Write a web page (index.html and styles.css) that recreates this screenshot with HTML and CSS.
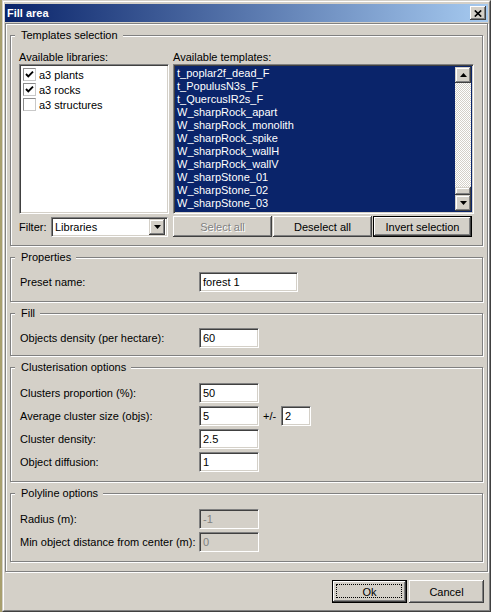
FILE: index.html
```html
<!DOCTYPE html>
<html>
<head>
<meta charset="utf-8">
<title>Fill area</title>
<link rel="stylesheet" href="styles.css">
</head>
<body>
<div class="window">
  <div class="frame">
    <div class="titlebar">
      <span class="title">Fill area</span>
      <span class="close"><svg width="8" height="7" viewBox="0 0 8 7"><path d="M0.8 0.5 L7.2 6.5 M7.2 0.5 L0.8 6.5" stroke="#000" stroke-width="1.7" fill="none"/></svg></span>
    </div>
    <div class="panel">
      <div class="group g-templates">
        <div class="group-title">Templates selection</div>
        <div class="tpl-grid">
          <div class="cap">Available libraries:</div>
          <div class="cap">Available templates:</div>
          <div class="listbox libs">
            <div class="lib-row"><span class="chk"><svg width="9" height="9" viewBox="0 0 9 9"><polyline points="1,4 3.3,6.4 8,1.6" stroke="#000" stroke-width="1.9" fill="none"/></svg></span>a3 plants</div>
            <div class="lib-row"><span class="chk"><svg width="9" height="9" viewBox="0 0 9 9"><polyline points="1,4 3.3,6.4 8,1.6" stroke="#000" stroke-width="1.9" fill="none"/></svg></span>a3 rocks</div>
            <div class="lib-row"><span class="chk"></span>a3 structures</div>
          </div>
          <div class="listbox tpls">
            <div class="tpl-items">
              <div class="tpl-row">t_poplar2f_dead_F</div>
              <div class="tpl-row">t_PopulusN3s_F</div>
              <div class="tpl-row">t_QuercusIR2s_F</div>
              <div class="tpl-row">W_sharpRock_apart</div>
              <div class="tpl-row">W_sharpRock_monolith</div>
              <div class="tpl-row">W_sharpRock_spike</div>
              <div class="tpl-row">W_sharpRock_wallH</div>
              <div class="tpl-row">W_sharpRock_wallV</div>
              <div class="tpl-row">W_sharpStone_01</div>
              <div class="tpl-row">W_sharpStone_02</div>
              <div class="tpl-row">W_sharpStone_03</div>
            </div>
            <div class="vscroll">
              <span class="sbtn"><svg width="7" height="4" viewBox="0 0 7 4"><polygon points="3.5,0 7,4 0,4" fill="#000"/></svg></span>
              <span class="track"></span>
              <span class="thumb"></span>
              <span class="sbtn"><svg width="7" height="4" viewBox="0 0 7 4"><polygon points="0,0 7,0 3.5,4" fill="#000"/></svg></span>
            </div>
          </div>
        </div>
        <div class="tpl-grid filter-grid">
          <div class="filter">
            <span class="filter-label">Filter:</span>
            <div class="combo">
              <span class="combo-text">Libraries</span>
              <span class="sbtn combo-btn"><svg width="7" height="4" viewBox="0 0 7 4"><polygon points="0,0 7,0 3.5,4" fill="#000"/></svg></span>
            </div>
          </div>
          <div class="btnrow">
            <span class="btn small disabled">Select all</span>
            <span class="btn small">Deselect all</span>
            <span class="btn small default">Invert selection</span>
          </div>
        </div>
      </div>

      <div class="group g-props">
        <div class="group-title">Properties</div>
        <div class="row"><span class="lbl">Preset name:</span><span class="edit wide">forest 1</span></div>
      </div>

      <div class="group g-fill">
        <div class="group-title">Fill</div>
        <div class="row"><span class="lbl">Objects density (per hectare):</span><span class="edit">60</span></div>
      </div>

      <div class="group g-cluster">
        <div class="group-title">Clusterisation options</div>
        <div class="rows">
          <div class="row"><span class="lbl">Clusters proportion (%):</span><span class="edit">50</span></div>
          <div class="row"><span class="lbl">Average cluster size (objs):</span><span class="edit">5</span><span class="pm">+/-</span><span class="edit tiny">2</span></div>
          <div class="row"><span class="lbl">Cluster density:</span><span class="edit">2.5</span></div>
          <div class="row"><span class="lbl">Object diffusion:</span><span class="edit">1</span></div>
        </div>
      </div>

      <div class="group g-poly">
        <div class="group-title">Polyline options</div>
        <div class="rows">
          <div class="row"><span class="lbl">Radius (m):</span><span class="edit off">-1</span></div>
          <div class="row"><span class="lbl">Min object distance from center (m):</span><span class="edit off">0</span></div>
        </div>
      </div>
    </div>

    <div class="footer">
      <span class="btn big default focus">Ok</span>
      <span class="btn big">Cancel</span>
    </div>
  </div>
</div>
</body>
</html>
```

FILE: styles.css
```css
* { box-sizing: border-box; }

html, body {
  margin: 0;
  padding: 0;
}

body {
  width: 491px;
  height: 612px;
  overflow: hidden;
  background: #a89f6e;
  font-family: "Liberation Sans", Arial, sans-serif;
  font-size: 11px;
  color: #000;
}

.window {
  margin-left: 2px;
  width: 489px;
  height: 612px;
  background: #d4d0c8;
  border: 1px solid;
  border-color: #d4d0c8 #404040 #404040 #d4d0c8;
}

.frame {
  height: 100%;
  border: 1px solid;
  border-color: #ffffff #808080 #808080 #ffffff;
  padding: 1px;
  display: flex;
  flex-direction: column;
}

.titlebar {
  height: 18px;
  margin-top: 1px;
  display: flex;
  align-items: center;
  justify-content: space-between;
  background: linear-gradient(to right, #0a246a, #a6caf0);
  padding-left: 2px;
}

.title {
  color: #fff;
  font-weight: bold;
  font-size: 11px;
  line-height: 13px;
}

.close {
  width: 16px;
  height: 14px;
  margin-right: 2px;
  background: #d4d0c8;
  display: flex;
  align-items: center;
  justify-content: center;
  box-shadow: inset -1px -1px #404040, inset 1px 1px #ffffff, inset -2px -2px #808080;
}

.panel {
  margin-top: 1px;
  border: 1px solid #808080;
  box-shadow: inset 1px 1px #ffffff, 1px 1px #ffffff;
  padding: 11px 4px 9px 4px;
}

.group {
  position: relative;
  border: 1px solid #808080;
  box-shadow: inset 1px 1px #ffffff, 1px 1px #ffffff;
  margin-top: 11px;
}

.group:first-child { margin-top: 0; }

.group-title {
  position: absolute;
  top: -8px;
  left: 4px;
  padding: 0 5px 0 6px;
  background: #d4d0c8;
  line-height: 14px;
  white-space: nowrap;
}

.g-templates { height: 211px; padding: 14px 7px 0 8px; }
.g-props { height: 45px; padding: 14px 9px 0 9px; }
.g-fill { height: 43px; padding: 14px 9px 0 9px; }
.g-cluster { height: 115px; padding: 15px 9px 0 9px; }
.g-poly { height: 69px; padding: 15px 9px 0 9px; }

.tpl-grid {
  display: grid;
  grid-template-columns: 150px 301px;
  grid-template-rows: 14px 150px;
  column-gap: 4px;
}

.cap {
  line-height: 14px;
  white-space: nowrap;
}

.listbox {
  border: 1px solid;
  border-color: #808080 #ffffff #ffffff #808080;
  box-shadow: inset 1px 1px #404040, inset -1px -1px #d4d0c8;
  background: #fff;
  overflow: hidden;
}

.libs {
  padding: 2px;
}

.lib-row {
  display: flex;
  align-items: center;
  height: 15px;
  padding-left: 1px;
  white-space: nowrap;
}

.lib-row:first-child { margin-top: 0; }

.chk {
  width: 13px;
  height: 13px;
  border: 1px solid;
  border-color: #8c8c8c #c8c8c8 #c8c8c8 #8c8c8c;
  background: #fff;
  margin-right: 3px;
  display: flex;
  align-items: center;
  justify-content: center;
  flex: none;
}

.tpls {
  display: flex;
  padding: 2px;
  background: #0a246a;
}

.tpl-items {
  flex: 1;
  overflow: hidden;
  color: #fff;
}

.tpl-row {
  height: 13px;
  line-height: 13px;
  padding-left: 1px;
  white-space: nowrap;
}

.vscroll {
  width: 16px;
  display: flex;
  flex-direction: column;
}

.sbtn {
  width: 16px;
  height: 16px;
  flex: none;
  background: #d4d0c8;
  display: flex;
  align-items: center;
  justify-content: center;
  box-shadow: inset -1px -1px #404040, inset 1px 1px #d4d0c8, inset -2px -2px #808080, inset 2px 2px #ffffff;
}

.track {
  flex: 1;
  background-image: conic-gradient(#ffffff 25%, #d4d0c8 0 50%, #ffffff 0 75%, #d4d0c8 0);
  background-size: 2px 2px;
}

.thumb {
  height: 8px;
  flex: none;
  background: #d4d0c8;
  box-shadow: inset -1px -1px #404040, inset 1px 1px #d4d0c8, inset -2px -2px #808080, inset 2px 2px #ffffff;
}

.filter-grid {
  grid-template-rows: 21px;
  margin-top: 2px;
}

.filter {
  display: flex;
  align-items: center;
  justify-content: space-between;
  padding-right: 1px;
}

.combo {
  width: 117px;
  height: 20px;
  display: flex;
  align-items: center;
  justify-content: space-between;
  border: 1px solid;
  border-color: #808080 #ffffff #ffffff #808080;
  box-shadow: inset 1px 1px #404040, inset -1px -1px #d4d0c8;
  background: #fff;
  padding: 2px;
}

.combo-text {
  padding-left: 1px;
  line-height: 14px;
}

.combo-btn { width: 16px; height: 16px; }

.btnrow {
  display: flex;
  gap: 1px;
}

.btn {
  display: flex;
  align-items: center;
  justify-content: center;
  background: #d4d0c8;
  box-shadow: inset -1px -1px #404040, inset 1px 1px #ffffff, inset -2px -2px #808080;
  position: relative;
  white-space: nowrap;
}

.btn.small { width: 99px; height: 21px; }
.btn.big { width: 75px; height: 23px; }

.btn.default {
  border: 1px solid #000;
}

.btn.disabled {
  color: #808080;
  text-shadow: 1px 1px #ffffff;
}

.btn.focus::after {
  content: "";
  position: absolute;
  left: 3px;
  top: 3px;
  right: 4px;
  bottom: 4px;
  border: 1px dotted #000;
}

.row {
  display: flex;
  align-items: center;
  height: 20px;
}

.rows {
  display: flex;
  flex-direction: column;
  gap: 3px;
}

.lbl {
  width: 179px;
  flex: none;
  white-space: nowrap;
}

.edit {
  width: 60px;
  height: 20px;
  border: 1px solid;
  border-color: #808080 #ffffff #ffffff #808080;
  box-shadow: inset 1px 1px #404040, inset -1px -1px #d4d0c8;
  background: #fff;
  padding: 0 3px;
  line-height: 18px;
  white-space: nowrap;
}

.edit.wide { width: 99px; }
.edit.tiny { width: 30px; }

.edit.off {
  background: #d4d0c8;
  color: #808080;
}

.pm {
  width: 18px;
  margin-left: 4px;
  flex: none;
}

.footer {
  display: flex;
  justify-content: flex-end;
  gap: 2px;
  padding: 8px 4px 0 0;
}
```
